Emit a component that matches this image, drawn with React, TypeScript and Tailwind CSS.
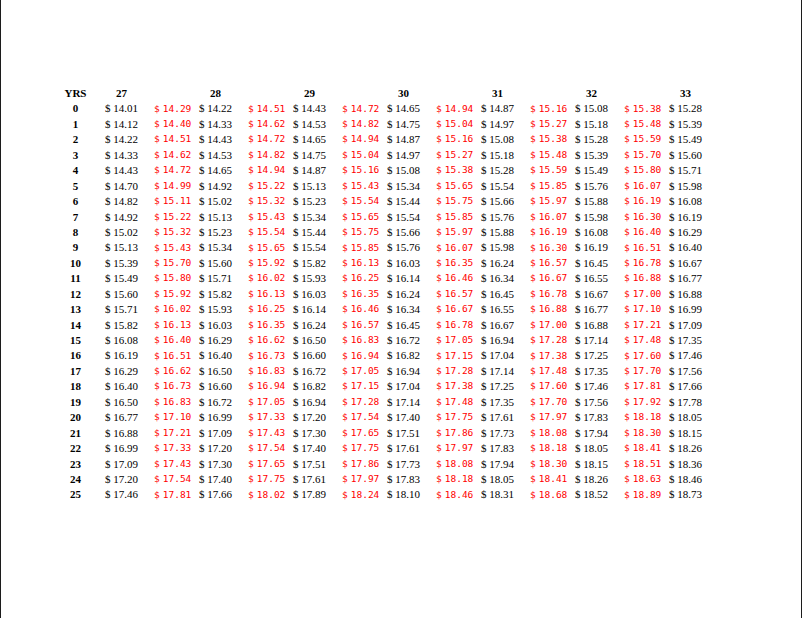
const years = ['27', '28', '29', '30', '31', '32', '33'];

const rows: string[][] = [
  ['14.01', '14.29', '14.22', '14.51', '14.43', '14.72', '14.65', '14.94', '14.87', '15.16', '15.08', '15.38', '15.28'],
  ['14.12', '14.40', '14.33', '14.62', '14.53', '14.82', '14.75', '15.04', '14.97', '15.27', '15.18', '15.48', '15.39'],
  ['14.22', '14.51', '14.43', '14.72', '14.65', '14.94', '14.87', '15.16', '15.08', '15.38', '15.28', '15.59', '15.49'],
  ['14.33', '14.62', '14.53', '14.82', '14.75', '15.04', '14.97', '15.27', '15.18', '15.48', '15.39', '15.70', '15.60'],
  ['14.43', '14.72', '14.65', '14.94', '14.87', '15.16', '15.08', '15.38', '15.28', '15.59', '15.49', '15.80', '15.71'],
  ['14.70', '14.99', '14.92', '15.22', '15.13', '15.43', '15.34', '15.65', '15.54', '15.85', '15.76', '16.07', '15.98'],
  ['14.82', '15.11', '15.02', '15.32', '15.23', '15.54', '15.44', '15.75', '15.66', '15.97', '15.88', '16.19', '16.08'],
  ['14.92', '15.22', '15.13', '15.43', '15.34', '15.65', '15.54', '15.85', '15.76', '16.07', '15.98', '16.30', '16.19'],
  ['15.02', '15.32', '15.23', '15.54', '15.44', '15.75', '15.66', '15.97', '15.88', '16.19', '16.08', '16.40', '16.29'],
  ['15.13', '15.43', '15.34', '15.65', '15.54', '15.85', '15.76', '16.07', '15.98', '16.30', '16.19', '16.51', '16.40'],
  ['15.39', '15.70', '15.60', '15.92', '15.82', '16.13', '16.03', '16.35', '16.24', '16.57', '16.45', '16.78', '16.67'],
  ['15.49', '15.80', '15.71', '16.02', '15.93', '16.25', '16.14', '16.46', '16.34', '16.67', '16.55', '16.88', '16.77'],
  ['15.60', '15.92', '15.82', '16.13', '16.03', '16.35', '16.24', '16.57', '16.45', '16.78', '16.67', '17.00', '16.88'],
  ['15.71', '16.02', '15.93', '16.25', '16.14', '16.46', '16.34', '16.67', '16.55', '16.88', '16.77', '17.10', '16.99'],
  ['15.82', '16.13', '16.03', '16.35', '16.24', '16.57', '16.45', '16.78', '16.67', '17.00', '16.88', '17.21', '17.09'],
  ['16.08', '16.40', '16.29', '16.62', '16.50', '16.83', '16.72', '17.05', '16.94', '17.28', '17.14', '17.48', '17.35'],
  ['16.19', '16.51', '16.40', '16.73', '16.60', '16.94', '16.82', '17.15', '17.04', '17.38', '17.25', '17.60', '17.46'],
  ['16.29', '16.62', '16.50', '16.83', '16.72', '17.05', '16.94', '17.28', '17.14', '17.48', '17.35', '17.70', '17.56'],
  ['16.40', '16.73', '16.60', '16.94', '16.82', '17.15', '17.04', '17.38', '17.25', '17.60', '17.46', '17.81', '17.66'],
  ['16.50', '16.83', '16.72', '17.05', '16.94', '17.28', '17.14', '17.48', '17.35', '17.70', '17.56', '17.92', '17.78'],
  ['16.77', '17.10', '16.99', '17.33', '17.20', '17.54', '17.40', '17.75', '17.61', '17.97', '17.83', '18.18', '18.05'],
  ['16.88', '17.21', '17.09', '17.43', '17.30', '17.65', '17.51', '17.86', '17.73', '18.08', '17.94', '18.30', '18.15'],
  ['16.99', '17.33', '17.20', '17.54', '17.40', '17.75', '17.61', '17.97', '17.83', '18.18', '18.05', '18.41', '18.26'],
  ['17.09', '17.43', '17.30', '17.65', '17.51', '17.86', '17.73', '18.08', '17.94', '18.30', '18.15', '18.51', '18.36'],
  ['17.20', '17.54', '17.40', '17.75', '17.61', '17.97', '17.83', '18.18', '18.05', '18.41', '18.26', '18.63', '18.46'],
  ['17.46', '17.81', '17.66', '18.02', '17.89', '18.24', '18.10', '18.46', '18.31', '18.68', '18.52', '18.89', '18.73'],
];

function Price({ value, red }: { value: string; red: boolean }) {
  if (red) {
    return (
      <div className="w-[45px] shrink-0 text-[9.5px] text-[#ff0000] font-[family-name:'DejaVu_Sans_Mono',monospace]">
        $<span className="ml-[3px]">{value}</span>
      </div>
    );
  }
  return (
    <div className="w-[49px] shrink-0 whitespace-pre">
      {'$ '}
      {value}
    </div>
  );
}

export default function App() {
  return (
    <div className="h-[618px] w-[802px] border-x border-[#1c1c1c] bg-white pt-[86px] pl-[59px] text-[11px] text-black font-[family-name:'Liberation_Serif',serif]">
      <div className="flex h-[15px] items-center font-bold">
        <div className="mr-[14px] w-[31px] shrink-0 text-center">YRS</div>
        {years.map((year, i) => (
          <div key={year} className={`flex shrink-0 ${i < years.length - 1 ? 'w-[94px]' : 'w-[49px]'}`}>
            <div className="w-[33px] text-center">{year}</div>
          </div>
        ))}
      </div>
      {rows.map((row, r) => (
        <div key={r} className="flex h-[15.44px] items-center">
          <div className="mr-[14px] w-[31px] shrink-0 text-center font-bold">{r}</div>
          {row.map((value, c) => (
            <Price key={c} value={value} red={c % 2 === 1} />
          ))}
        </div>
      ))}
    </div>
  );
}
